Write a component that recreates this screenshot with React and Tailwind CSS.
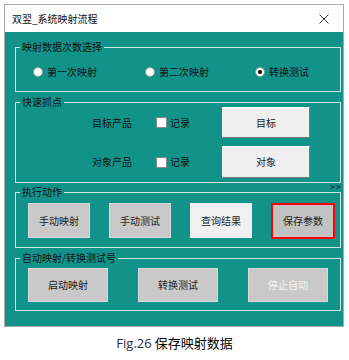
import React from "react";

const cjk = { fontFamily: '"Noto Sans CJK SC", "Noto Sans", sans-serif' };

function Radio({ label, checked }) {
  return (
    <div className="flex items-center gap-[4px]">
      <span className="flex h-[10px] w-[10px] items-center justify-center rounded-full border border-[#9c9c9c] bg-white">
        {checked && <span className="h-[4px] w-[4px] rounded-full bg-black" />}
      </span>
      <span className="text-[10px] leading-[12px] text-[#111]">{label}</span>
    </div>
  );
}

function Check() {
  return <span className="block h-[11px] w-[11px] border border-[#8a8a8a] bg-white" />;
}

function Group({ title, className, children }) {
  return (
    <fieldset className={"ml-[10px] w-[326px] border border-[#cfe3e0] " + className}>
      <legend className="ml-[4px] px-[2px] text-[10px] leading-[12px] text-[#111]">{title}</legend>
      {children}
    </fieldset>
  );
}

function Btn({ children, className }) {
  return (
    <div className={"flex items-center justify-center text-[10px] leading-[12px] " + className}>
      {children}
    </div>
  );
}

export default function App() {
  return (
    <div className="h-[360px] w-[349px] bg-white" style={cjk}>
      <div className="ml-[4px] mt-[4px] w-[340px] border border-[#a8a8a8]">
        {/* title bar */}
        <div className="flex h-[27px] items-center justify-between bg-white pl-[7px] pr-[14px]">
          <span className="text-[10px] leading-[12px] text-[#111]">双翌_系统映射流程</span>
          <svg width="10" height="10" viewBox="0 0 10 10">
            <path d="M0.5 0.5 L9.5 9.5 M9.5 0.5 L0.5 9.5" stroke="#333" strokeWidth="1" />
          </svg>
        </div>

        {/* body */}
        <div className="relative h-[294px] bg-[#12938a] pt-[9px]">
          <Group title="映射数据次数选择" className="h-[51px]">
            <div className="flex h-[38px] items-center pl-[17px]">
              <div className="w-[112px]"><Radio label="第一次映射" /></div>
              <div className="w-[110px]"><Radio label="第二次映射" /></div>
              <Radio label="转换测试" checked />
            </div>
          </Group>

          <Group title="快速抓点" className="mt-[4px] h-[87px]">
            <div className="-mt-[1px] flex flex-col gap-[8px]">
              {[["目标产品", "目标"], ["对象产品", "对象"]].map(([l, b], i) => (
                <div key={l} className={"flex items-center pl-[76px] " + (i ? "h-[32px]" : "h-[31px]")}>
                  <span className="w-[40px] text-[10px] leading-[12px] text-[#111]">{l}</span>
                  <span className="ml-[24px]"><Check /></span>
                  <span className="ml-[3px] w-[20px] text-[10px] leading-[12px] text-[#111]">记录</span>
                  <Btn className="ml-[32px] h-full w-[88px] border border-b-[#7a7a7a] border-l-white border-r-[#7a7a7a] border-t-white bg-[#efefef] text-[#222]">
                    {b}
                  </Btn>
                </div>
              ))}
            </div>
          </Group>

          <Group title="执行动作" className="mt-[3px] h-[62px]">
            <div className="flex gap-[19px] pl-[12px] pt-[5px]">
              <Btn className="h-[35px] w-[62px] border border-[#d8d8d8] bg-[#c9c9c9] text-[#222]">手动映射</Btn>
              <Btn className="h-[35px] w-[62px] border border-[#d8d8d8] bg-[#c9c9c9] text-[#222]">手动测试</Btn>
              <Btn className="h-[35px] w-[62px] bg-[#f0f0f0] text-[#222]">查询结果</Btn>
              <Btn className="h-[36px] w-[64px] border-2 border-[#ff0000] bg-[#c2c2c2] text-[#222]">保存参数</Btn>
            </div>
          </Group>

          <Group title="自动映射/转换测试号" className="mt-[4px] h-[59px]">
            <div className="flex gap-[30px] pl-[12px] pt-[4px]">
              <Btn className="h-[34px] w-[80px] border border-[#d8d8d8] bg-[#c9c9c9] text-[#222]">启动映射</Btn>
              <Btn className="h-[34px] w-[80px] border border-[#d8d8d8] bg-[#c9c9c9] text-[#222]">转换测试</Btn>
              <Btn className="h-[34px] w-[80px] border border-[#d8d8d8] bg-[#c9c9c9] text-[#f4f4f4]">停止自动</Btn>
            </div>
          </Group>

          <span className="absolute right-[1px] top-[150px] whitespace-nowrap text-[9px] leading-[9px] tracking-[1px] text-[#1a1a1a]">&gt;&gt;</span>
        </div>
      </div>

      <div className="mt-[8px] text-center text-[13px] leading-[15px] text-black">
        <span style={{ fontFamily: '"Open Sans", "Noto Sans", sans-serif' }} className="text-[#2b2b44]">Fig.26</span>{" "}
        保存映射数据
      </div>
    </div>
  );
}
